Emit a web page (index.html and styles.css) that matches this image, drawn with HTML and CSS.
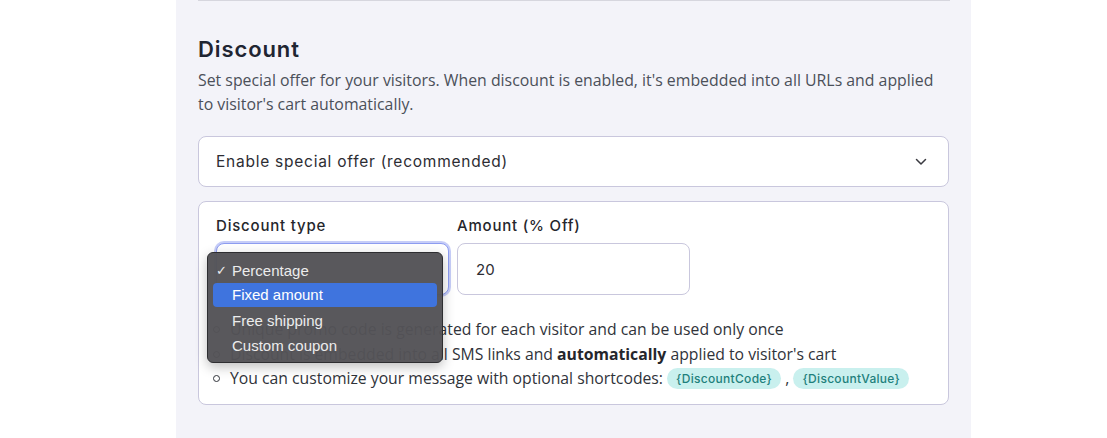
FILE: index.html
```html
<!DOCTYPE html>
<html>
<head>
<meta charset="utf-8">
<link rel="stylesheet" href="styles.css">
</head>
<body>
<div class="panel">
  <div class="divider"></div>
  <h2 class="title">Discount</h2>
  <p class="desc">Set special offer for your visitors. When discount is enabled, it's embedded into all URLs and applied to visitor's cart automatically.</p>
  <div class="select-big">
    <span>Enable special offer (recommended)</span>
    <svg class="chev" width="12" height="8" viewBox="0 0 12 8"><path d="M1.5 1.5 L6 6 L10.5 1.5" fill="none" stroke="#3a3a40" stroke-width="1.5" stroke-linecap="round" stroke-linejoin="round"/></svg>
  </div>
  <div class="card">
    <div class="fields">
      <div class="field">
        <div class="label">Discount type</div>
        <div class="sel focus"></div>
      </div>
      <div class="field">
        <div class="label">Amount (% Off)</div>
        <div class="inp">20</div>
      </div>
    </div>
    <ul class="notes">
      <li>Unique promo code is generated for each visitor and can be used only once</li>
      <li>Discount is embedded into all SMS links and <b>automatically</b> applied to visitor's cart</li>
      <li>You can customize your message with optional shortcodes: <span class="code">{DiscountCode}</span> , <span class="code">{DiscountValue}</span></li>
    </ul>
    <div class="menu">
      <div class="opt"><span class="check">✓</span>Percentage</div>
      <div class="opt hl">Fixed amount</div>
      <div class="opt">Free shipping</div>
      <div class="opt">Custom coupon</div>
    </div>
  </div>
</div>
</body>
</html>
```

FILE: styles.css
```css
html, body {
  margin: 0;
  padding: 0;
  background: #ffffff;
}
body {
  width: 1107px;
  height: 438px;
  overflow: hidden;
}
.panel {
  margin-left: 176px;
  width: 795px;
  height: 438px;
  background: #f3f3f9;
  padding: 0 22px 0 22px;
  box-sizing: border-box;
}
.divider {
  height: 1px;
  background: #d6d6de;
  margin-right: -1px;
}
.title {
  margin: 33px 0 0 0;
  font-family: "Inter", "Poppins", sans-serif;
  font-weight: 600;
  font-size: 22px;
  line-height: 30px;
  color: #1f2532;
  letter-spacing: 0.9px;
}
.desc {
  margin: 4px 0 0 0;
  font-family: "Open Sans", sans-serif;
  font-size: 15.85px;
  line-height: 24px;
  color: #4b5059;
}
.select-big {
  margin-top: 20px;
  height: 51px;
  box-sizing: border-box;
  border: 1px solid #c9c7dd;
  border-radius: 8px;
  background: #fff;
  display: flex;
  align-items: center;
  justify-content: space-between;
  padding: 0 21px 0 17px;
  font-family: "Inter", sans-serif;
  font-size: 15.5px;
  letter-spacing: 0.75px;
  color: #2d2d33;
}
.card {
  position: relative;
  margin-top: 14px;
  height: 204px;
  box-sizing: border-box;
  border: 1px solid #c9c7dd;
  border-radius: 8px;
  background: #fff;
  padding: 13px 17px 0 17px;
}
.fields {
  display: flex;
  gap: 8px;
}
.field {
  display: flex;
  flex-direction: column;
  gap: 6px;
}
.label {
  font-family: "Inter", sans-serif;
  font-weight: 500;
  font-size: 15px;
  line-height: 22px;
  letter-spacing: 0.8px;
  color: #25262c;
}
.sel {
  width: 233px;
  height: 52px;
  box-sizing: border-box;
  border: 1px solid #8d9cf0;
  border-radius: 8px;
  background: #fff;
}
.sel.focus {
  box-shadow: 0 0 0 2px #c6cdf8;
}
.inp {
  width: 233px;
  height: 52px;
  box-sizing: border-box;
  border: 1px solid #c9c7dd;
  border-radius: 8px;
  background: #fff;
  display: flex;
  align-items: center;
  padding-left: 18px;
  font-family: "Inter", sans-serif;
  font-size: 15px;
  color: #2d2d33;
}
.notes {
  list-style: none;
  margin: 22px 0 0 -4px;
  padding: 0;
  font-family: "Open Sans", sans-serif;
  font-size: 15.75px;
  line-height: 24.5px;
  color: #30333a;
}
.notes li {
  position: relative;
  padding-left: 18px;
  white-space: nowrap;
}
.notes li::before {
  content: "";
  position: absolute;
  left: 1px;
  top: 9px;
  width: 5px;
  height: 5px;
  border: 1.3px solid #30333a;
  border-radius: 50%;
}
.notes b {
  font-weight: 700;
  color: #25262c;
}
.code {
  display: inline-block;
  background: #c9f0ee;
  color: #1f807c;
  font-family: "Inter", sans-serif;
  font-weight: 500;
  font-size: 12px;
  line-height: 21px;
  padding: 0 9px;
  letter-spacing: 0.3px;
  border-radius: 11px;
  vertical-align: 1px;
}
.menu {
  position: absolute;
  left: 8px;
  top: 50px;
  width: 236px;
  height: 111px;
  box-sizing: border-box;
  background: rgba(84, 83, 87, 0.97);
  border: 1px solid #2e2e31;
  border-radius: 6px;
  box-shadow: 0 4px 12px rgba(0,0,0,0.25);
  padding: 5px 5px;
  font-family: "Liberation Sans", "Helvetica", sans-serif;
  font-size: 15px;
  color: #ececec;
}
.opt {
  position: relative;
  height: 25px;
  line-height: 25px;
  padding-left: 19px;
  border-radius: 4px;
}
.opt.hl {
  background: #3f74de;
  color: #ffffff;
  height: 24px;
  line-height: 24px;
  margin: 0 0 1px 0;
}
.check {
  position: absolute;
  left: 3px;
  font-size: 13px;
}
```
